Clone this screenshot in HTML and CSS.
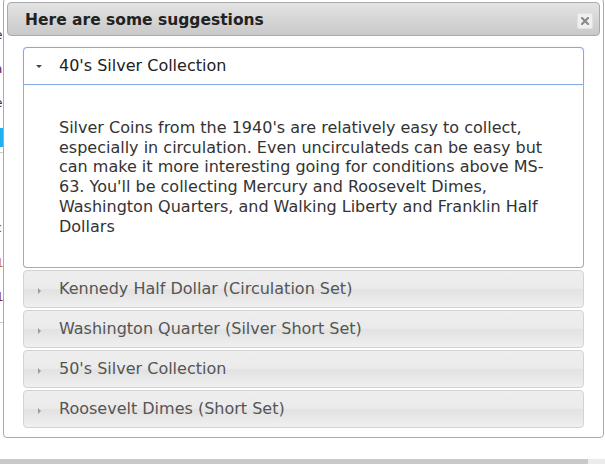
FILE: index.html
```html
<!DOCTYPE html>
<html lang="en">
<head>
    <meta charset="UTF-8">
    <title>Suggestions</title>
    <link rel="stylesheet" href="styles.css">
</head>
<body>

    <div class="page-behind">
        <div class="peek" style="top: -2px">r</div>
        <div class="peek" style="top: 28px">e</div>
        <div class="peek purple" style="top: 62px">a</div>
        <div class="peek" style="top: 96px">e</div>
        <div class="peek-bar" style="top: 128px"></div>
        <div class="peek-rule" style="top: 152px"></div>
        <div class="peek" style="top: 221px">c</div>
        <div class="peek orange" style="top: 256px">1</div>
        <div class="peek red" style="top: 290px">1</div>
        <div class="peek-rule" style="top: 322px"></div>
    </div>

    <div class="dialog">
        <div class="dialog-titlebar">
            <span class="dialog-title">Here are some suggestions</span>
            <button class="dialog-close" title="Close">
                <svg width="8" height="8" viewBox="0 0 8 8">
                    <path d="M1 1 L7 7 M7 1 L1 7" stroke="#8a8a8a" stroke-width="2.2" stroke-linecap="square"/>
                </svg>
            </button>
        </div>

        <div class="dialog-content">
            <div class="accordion">
                <h3 class="acc-header active"><span class="acc-icon down"></span>40's Silver Collection</h3>
                <div class="acc-panel">
                    <p>Silver Coins from the 1940's are relatively easy to collect, especially in circulation. Even uncirculateds can be easy but can make it more interesting going for conditions above MS-63. You'll be collecting Mercury and Roosevelt Dimes, Washington Quarters, and Walking Liberty and Franklin Half Dollars</p>
                </div>
                <h3 class="acc-header"><span class="acc-icon"></span>Kennedy Half Dollar (Circulation Set)</h3>
                <h3 class="acc-header"><span class="acc-icon"></span>Washington Quarter (Silver Short Set)</h3>
                <h3 class="acc-header"><span class="acc-icon"></span>50's Silver Collection</h3>
                <h3 class="acc-header"><span class="acc-icon"></span>Roosevelt Dimes (Short Set)</h3>
            </div>
        </div>
    </div>

    <div class="bottom-bar"></div>

</body>
</html>
```

FILE: styles.css
```css
body {
    margin: 0;
    width: 605px;
    height: 464px;
    overflow: hidden;
    position: relative;
    background: #fff;
    font-family: "DejaVu Sans", Verdana, sans-serif;
}

/* bits of the page under the dialog, cut at the left edge */
.page-behind {
    position: absolute;
    left: 0;
    top: 0;
    width: 3px;
    height: 440px;
    overflow: hidden;
}

.peek {
    position: absolute;
    left: -5px;
    font-size: 12px;
    color: #1b2b55;
}

.peek.purple { color: #5a2a7a; }
.peek.orange { color: #c76a10; left: -4px; }
.peek.red { color: #8a2030; left: -4px; }

.peek-bar {
    position: absolute;
    left: 0;
    width: 3px;
    height: 19px;
    background: #22b0f0;
}

.peek-rule {
    position: absolute;
    left: 0;
    width: 3px;
    height: 1px;
    background: #c8c8c8;
}

/* dialog */
.dialog {
    position: absolute;
    left: 3px;
    top: -2px;
    width: 593px;
    padding: 3px;
    border: 1px solid #aaa;
    border-radius: 4px;
    background: #fff;
}

.dialog-titlebar {
    height: 32px;
    border: 1px solid #aaa;
    border-radius: 4px;
    background: linear-gradient(#e3e3e3, #c9c9c9);
    display: flex;
    align-items: center;
    justify-content: space-between;
    padding: 0 6px 0 17px;
}

.dialog-title {
    font-weight: bold;
    font-size: 15.5px;
    color: #222;
    padding-top: 2px;
}

.dialog-close {
    width: 16px;
    height: 16px;
    padding: 0;
    margin-top: 4px;
    border: 1px solid #e2e2e2;
    border-radius: 2px;
    background: #efefef;
    display: flex;
    align-items: center;
    justify-content: center;
}

.dialog-content {
    padding: 11px 16px 6px 16px;
}

/* accordion */
.acc-header {
    margin: 2px 0 0 0;
    height: 36px;
    border: 1px solid #d3d3d3;
    border-radius: 4px;
    background: linear-gradient(#eeeeee 0%, #ebebeb 48%, #e2e2e2 52%, #f0f0f0 100%);
    font-weight: normal;
    font-size: 16px;
    line-height: 36px;
    color: #555;
    padding-left: 35px;
    position: relative;
}

.acc-header.active {
    margin-top: 0;
    background: #fff;
    border-color: #84a8e6;
    border-radius: 4px 4px 0 0;
    box-shadow: 0 0 1px #a8c2ef;
    color: #222;
}

.acc-icon {
    position: absolute;
    left: 14px;
    top: 17px;
    width: 0;
    height: 0;
    border-top: 3px solid transparent;
    border-bottom: 3px solid transparent;
    border-left: 3px solid #9a9a9a;
}

.acc-icon.down {
    left: 12px;
    top: 17px;
    border-left: 3px solid transparent;
    border-right: 3px solid transparent;
    border-top: 3px solid #444;
    border-bottom: 0;
}

.acc-panel {
    border: 1px solid #aaa;
    border-top: 0;
    border-radius: 0 0 4px 4px;
    padding: 33px 35px 31px 35px;
    height: 118px;
}

.acc-panel p {
    margin: 0;
    font-size: 16px;
    line-height: 19.7px;
    color: #333;
}

.bottom-bar {
    position: absolute;
    left: 0;
    bottom: 0;
    width: 605px;
    height: 5px;
    background: linear-gradient(to right, #c9c9c9 588px, #ececec 588px);
}
```
